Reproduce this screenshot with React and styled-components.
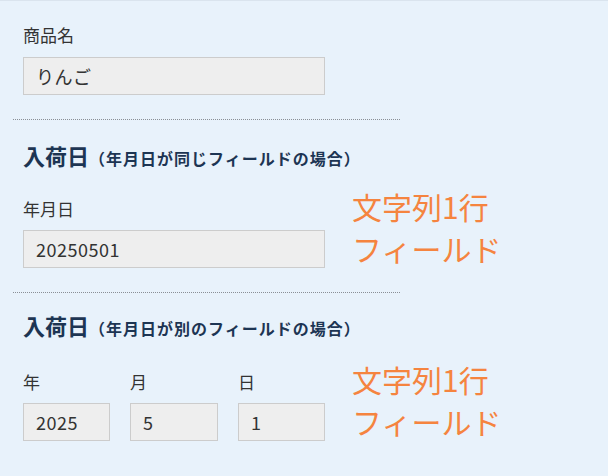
import React from "react";
import styled, { createGlobalStyle } from "styled-components";

const Global = createGlobalStyle`
  html, body { margin: 0; padding: 0; background: #e8f2fb; }
  body {
    font-family: "Noto Sans CJK JP", "Noto Sans", sans-serif;
    color: #333;
  }
`;

const Page = styled.div`
  border-top: 1px solid #dae4ee;
  padding: 22px 0 0 23px;
  width: 608px;
  height: 475px;
  box-sizing: border-box;
`;

const Row = styled.div`
  display: flex;
  align-items: flex-end;
  gap: 27px;
`;

const Field = styled.div`
  display: flex;
  flex-direction: column;
  width: ${(p) => p.$w || 302}px;
`;

const Label = styled.div`
  font-size: 17px;
  line-height: 24px;
  margin-bottom: ${(p) => p.$gap ?? 9}px;
  color: #333;
`;

const Input = styled.div`
  box-sizing: border-box;
  height: 38px;
  background: #eeeeee;
  border: 1px solid #cccccc;
  padding: 0 12px;
  display: flex;
  align-items: center;
  font-size: 18px;
  letter-spacing: 0.5px;
  color: #333;
`;

const Divider = styled.hr`
  border: 0;
  border-top: 1px dotted #8a8f96;
  margin: ${(p) => p.$top}px 0 0 -10px;
  width: 387px;
  height: 0;
`;

const Heading = styled.h2`
  margin: ${(p) => p.$top}px 0 ${(p) => p.$bottom}px 0;
  font-size: 22px;
  line-height: 30px;
  font-weight: 700;
  color: #1d3553;
  display: flex;
  align-items: baseline;
`;

const Sub = styled.span`
  font-size: 16px;
  font-weight: 700;
  letter-spacing: 1px;
`;

const Group = styled.div`
  display: flex;
  gap: 20px;
  width: 302px;
`;

const Note = styled.div`
  color: #f5843f;
  font-size: 30px;
  line-height: 42px;
  margin-bottom: -1px;
`;

export default function App() {
  return (
    <>
      <Global />
      <Page>
        <Field>
          <Label $gap={10}>商品名</Label>
          <Input>りんご</Input>
        </Field>
        <Divider $top={24} />
        <Heading $top={20} $bottom={12}>
          入荷日<Sub>（年月日が同じフィールドの場合）</Sub>
        </Heading>
        <Row>
          <Field>
            <Label>年月日</Label>
            <Input>20250501</Input>
          </Field>
          <Note>
            文字列1行
            <br />
            フィールド
          </Note>
        </Row>
        <Divider $top={24} />
        <Heading $top={17} $bottom={15}>
          入荷日<Sub>（年月日が別のフィールドの場合）</Sub>
        </Heading>
        <Row>
          <Group>
            <Field $w={87}>
              <Label>年</Label>
              <Input>2025</Input>
            </Field>
            <Field $w={88}>
              <Label>月</Label>
              <Input>5</Input>
            </Field>
            <Field $w={87}>
              <Label>日</Label>
              <Input>1</Input>
            </Field>
          </Group>
          <Note>
            文字列1行
            <br />
            フィールド
          </Note>
        </Row>
      </Page>
    </>
  );
}
